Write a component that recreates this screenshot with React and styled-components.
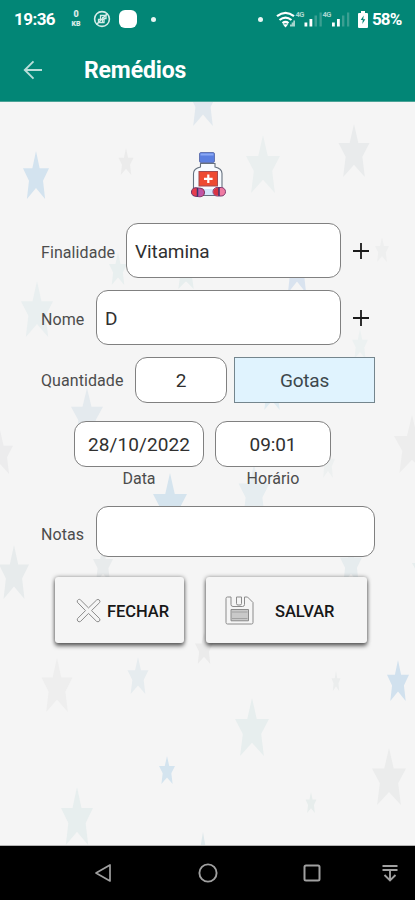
import React from "react";
import styled, { createGlobalStyle } from "styled-components";

const GlobalStyle = createGlobalStyle`
  * { box-sizing: border-box; }
  html, body { margin: 0; padding: 0; }
  body { font-family: Roboto, "Liberation Sans", sans-serif; }
`;

const Screen = styled.div`
  width: 415px;
  height: 900px;
  display: flex;
  flex-direction: column;
  background: #f5f5f5;
  overflow: hidden;
`;

const Header = styled.header`
  height: 102px;
  flex: none;
  background: #028676;
  border-bottom: 1px solid #4aa397;
  color: #fff;
`;

const StatusBar = styled.div`
  height: 38px;
  display: flex;
  align-items: center;
  padding: 0 13px 0 14px;
`;

const Clock = styled.span`
  width: 42px;
  font-size: 17px;
  font-weight: 700;
  line-height: 20px;
  letter-spacing: -0.55px;
  white-space: nowrap;
  margin-right: 14px;
`;

const Speed = styled.div`
  width: 12px;
  display: flex;
  flex-direction: column;
  align-items: center;
  font-size: 9px;
  line-height: 11px;
  font-weight: 900;
  opacity: 0.85;
  margin: -2px 11px 0 0;
`;

const SpeedUnit = styled.span`
  font-size: 7px;
  line-height: 8px;
`;

const AppBlob = styled.span`
  width: 18px;
  height: 18px;
  border-radius: 6px;
  background: #fff;
  margin-left: 8px;
`;

const Dot = styled.span`
  width: 5px;
  height: 5px;
  border-radius: 50%;
  background: #e8f5f3;
  margin: 0 ${(p) => p.$after || 0}px 0 ${(p) => p.$before || 0}px;
`;

const StatusRight = styled.div`
  margin-left: auto;
  display: flex;
  align-items: center;
`;

const Battery = styled.span`
  font-size: 17px;
  font-weight: 700;
  line-height: 20px;
  letter-spacing: -0.9px;
  width: 30px;
  margin-left: 4px;
  white-space: nowrap;
`;

const TitleBar = styled.div`
  height: 63px;
  display: flex;
  align-items: center;
  padding-left: 23px;
`;

const Title = styled.h1`
  margin: 3px 0 0 41px;
  font-size: 23px;
  line-height: 28px;
  font-weight: 700;
  letter-spacing: -0.15px;
`;

const Main = styled.main`
  position: relative;
  flex: 1;
  isolation: isolate;
  border-bottom: 1px solid #b4b4b4;
  overflow: hidden;
`;

const Backdrop = styled.svg`
  position: absolute;
  inset: 0;
  z-index: -1;
`;

const Form = styled.div`
  display: flex;
  flex-direction: column;
  padding: 49px 40px 0 41px;
`;

const Hero = styled.div`
  height: 48px;
  display: flex;
  justify-content: center;
  margin-bottom: 24px;
`;

const Row = styled.div`
  height: ${(p) => p.$h}px;
  display: flex;
  align-items: center;
  margin-bottom: ${(p) => p.$gap}px;
`;

const Label = styled.label`
  width: ${(p) => p.$w}px;
  flex: none;
  padding-top: ${(p) => p.$drop ?? 4}px;
  font-size: 16px;
  line-height: 20px;
  letter-spacing: 0.08px;
  color: #4c4c4c;
  font-weight: 400;
  white-space: nowrap;
`;

const Field = styled.div`
  width: ${(p) => p.$w}px;
  height: 100%;
  flex: none;
  display: flex;
  align-items: center;
  justify-content: ${(p) => (p.$center ? "center" : "flex-start")};
  padding: 2px ${(p) => (p.$center ? 0 : 8)}px 0;
  border: 1px solid #808080;
  border-radius: 12px;
  background: #fff;
  color: #303030;
  font-size: 19px;
  line-height: 24px;
  letter-spacing: ${(p) => p.$track || 0}px;
`;

const UnitButton = styled.button`
  width: 141px;
  height: 46px;
  margin-left: 7px;
  padding: 2px 0 0;
  border: 1px solid #74858d;
  background: #e0f3fe;
  font: 400 19px/24px Roboto, sans-serif;
  letter-spacing: -0.2px;
  color: #3c474c;
`;

const AddButton = styled.button`
  width: 16px;
  height: 16px;
  margin-left: 12px;
  padding: 0;
  border: 0;
  background: transparent;
  display: flex;
`;

const DateRow = styled.div`
  display: flex;
  gap: 11px;
  margin: 0 0 15px 33px;
`;

const DateColumn = styled.div`
  width: ${(p) => p.$w}px;
  display: flex;
  flex-direction: column;
  align-items: center;
`;

const DateBox = styled.div`
  height: 46px;
  display: flex;
`;

const Caption = styled.span`
  margin-top: 2px;
  font-size: 16px;
  line-height: 20px;
  height: 22px;
  letter-spacing: 0;
  color: #4c4c4c;
`;

const Actions = styled.div`
  display: flex;
  gap: 22px;
  margin-left: 14px;
`;

const ActionButton = styled.button`
  width: ${(p) => p.$w}px;
  height: 66px;
  display: flex;
  align-items: center;
  padding: 1px 0 0 ${(p) => p.$pad}px;
  gap: ${(p) => p.$gap}px;
  border: 0;
  border-radius: 3px;
  background: #f5f5f5;
  box-shadow: 0 3px 4px rgba(0, 0, 0, 0.55), 0 0 4px rgba(0, 0, 0, 0.38);
  font: 500 16.5px/20px Roboto, sans-serif;
  letter-spacing: -0.05px;
  color: #181818;
  white-space: nowrap;
`;

const ActionText = styled.span`
  padding-top: 2px;
`;

const NavBar = styled.nav`
  height: 54px;
  flex: none;
  background: #000;
  display: flex;
  align-items: center;
  padding-left: 94px;
`;

const NavIcon = styled.svg`
  flex: none;
  margin-right: ${(p) => p.$gap}px;
`;

/* centre x, top, width, height, colour */
const STARS = [
  [203, 76, 28, 50, "#e1e8ee"],
  [36, 151, 26, 48, "#d3e3ef"],
  [126, 148, 15, 27, "#ebebeb"],
  [263, 135, 34, 58, "#eaefef"],
  [354, 124, 31, 53, "#e9ebec"],
  [37, 281, 32, 56, "#e9eff0"],
  [118, 252, 18, 33, "#e8efef"],
  [186, 255, 22, 34, "#e7eeee"],
  [297, 243, 26, 50, "#d9e3ef"],
  [382, 237, 14, 25, "#eeefef"],
  [360, 329, 16, 30, "#ecf1f1"],
  [272, 370, 22, 40, "#dfebf1"],
  [87, 388, 32, 52, "#e4eaee"],
  [170, 473, 34, 58, "#d5e4ee"],
  [0, 430, 26, 44, "#ececed"],
  [412, 415, 36, 58, "#ededed"],
  [254, 464, 31, 54, "#e6edf0"],
  [328, 448, 14, 30, "#edf0f0"],
  [14, 545, 30, 54, "#e7ebec"],
  [103, 546, 20, 36, "#e8ebec"],
  [351, 543, 22, 40, "#e6ecee"],
  [423, 550, 22, 36, "#e7eeee"],
  [57, 658, 31, 54, "#eeeeee"],
  [138, 657, 21, 37, "#e6ecef"],
  [204, 632, 18, 32, "#ebebeb"],
  [336, 671, 9, 20, "#ebeded"],
  [398, 660, 22, 41, "#d1e1ee"],
  [252, 698, 34, 58, "#e7eeee"],
  [389, 748, 34, 57, "#ebecec"],
  [167, 756, 16, 28, "#d4e4ef"],
  [311, 792, 11, 21, "#e7edec"],
  [77, 787, 32, 58, "#e7eeee"],
  [203, 832, 16, 36, "#dee8eb"],
];

const STAR_POINTS = "50,0 64,36 100,36 77,62 85,100 50,77 15,100 23,62 0,36 36,36";

function StarPattern() {
  return (
    <Backdrop width="415" height="744" viewBox="0 102 415 744">
      {STARS.map(([x, y, w, h, c], i) => (
        <polygon
          key={i}
          points={STAR_POINTS}
          fill={c}
          transform={`translate(${x - w / 2} ${y}) scale(${w / 100} ${h / 100})`}
        />
      ))}
    </Backdrop>
  );
}

function MutedIcon() {
  return (
    <svg width="18" height="18" viewBox="0 0 18 18" fill="none" stroke="#d5ece8">
      <circle cx="9" cy="9" r="7.4" strokeWidth="1.6" />
      <path d="M5.5 12.5V9.5h2V5.5H13v3h-2v4z" strokeWidth="1.3" />
      <path d="M3.5 14.5 14.5 3.5" strokeWidth="1.5" />
      <path d="M8 9.5h3M9.5 7v5" strokeWidth="1" />
    </svg>
  );
}

function SignalIcons() {
  return (
    <svg width="82" height="22" viewBox="0 0 82 22" fontFamily="Roboto, sans-serif">
      <g fill="none" stroke="#fff" strokeWidth="2.2">
        <path d="M1 8.200q8.500-6.800 17 0" />
        <path d="M3.500 12q6-4.800 12 0" />
        <path d="M6.500 15.200q3-2.400 6 0" />
      </g>
      <path d="m6.700 16.200 2.800 3.300 2.800-3.300z" fill="#fff" />
      <path d="M14 18.500v-2h1.700v-2h1.600v-2H19v6z" fill="#a7d4cd" />
      <text x="19.500" y="8.500" fontSize="7.500" fontWeight="700" fill="#a9d5ce" letterSpacing="-.5">4G</text>
      <text x="46.500" y="8.500" fontSize="7.500" fontWeight="700" fill="#a9d5ce" letterSpacing="-.5">4G</text>
      <path d="M28.500 14.500h2.800v4h-2.800zM33.500 11h2.800v7.500h-2.800zM56 14.500h2.800v4H56zM61 11h2.800v7.500H61z" fill="#fff" />
      <path d="M38.500 7.500H41v11h-2.500zM43.500 4.500h2.300v14h-2.300zM66 7.500h2.400v11H66zM71 4.500h2.300v14H71z" fill="#3b9f92" />
    </svg>
  );
}

function BatteryIcon() {
  return (
    <svg width="10" height="17" viewBox="0 0 10 17">
      <path d="M3 0h4v2h2q1 0 1 1v13q0 1-1 1H1q-1 0-1-1V3q0-1 1-1h2z" fill="#fff" />
      <path d="M5.700 4.500 2.700 9h2.100l-.5 4L7.300 8.200H5.200z" fill="#028676" />
    </svg>
  );
}

function BackArrow() {
  return (
    <svg width="20" height="20" viewBox="0 0 20 20" fill="none" stroke="#b9ded9" strokeWidth="1.900">
      <path d="M19 10H2M10.500 1.300 1.800 10l8.700 8.700" />
    </svg>
  );
}

function MedicineIcon() {
  return (
    <svg width="38" height="48" viewBox="0 0 38 48">
      <path d="M11.500 12.500v3.500q-7 1.500-7 6.500v22h28.500v-22q0-5-7-6.500v-3.500z" fill="#f7fbff" stroke="#66717f" strokeWidth="1.100" />
      <path d="M6 38h26v6H6z" fill="#d3e6fb" />
      <rect x="10.500" y="1.500" width="15" height="10" rx="1.500" fill="#5b7fe0" stroke="#5364a5" strokeWidth=".8" />
      <path d="M11.500 3.500h13" stroke="#8ba8f4" strokeWidth="2" />
      <rect x="10" y="20.500" width="18.500" height="14.500" fill="#ee4a32" stroke="#a34b50" strokeWidth="1" />
      <path d="M19.300 23.500v8.500M15 27.800h8.600" stroke="#fff" strokeWidth="2.200" />
      <rect x="2.500" y="37" width="13" height="8.500" rx="4.200" fill="#e83d4d" stroke="#703268" transform="rotate(5 9 41)" />
      <path d="M9 37.500v8l3-.2q3-1.500 2.800-4-.5-3.300-5.800-3.800z" fill="#bd55a8" />
      <path d="M8.500 37v8.500" stroke="#39356f" strokeWidth="1.500" />
      <rect x="24" y="36.500" width="12.500" height="8.500" rx="4.200" fill="#ef7ba2" stroke="#803b70" />
      <path d="M30 37h-2q-3.500 1-3.500 3.700 0 3 3.500 3.800h2z" fill="#d93342" />
      <path d="M30 36.500V45" stroke="#3a3771" strokeWidth="1.500" />
    </svg>
  );
}

function Add() {
  return (
    <AddButton aria-label="Adicionar">
      <svg width="16" height="16" viewBox="0 0 16 16">
        <path d="M8 0v16M0 8h16" stroke="#1a1a1a" strokeWidth="1.800" />
      </svg>
    </AddButton>
  );
}

function CloseIcon() {
  return (
    <svg width="25" height="25" viewBox="0 0 25 25">
      <path
        d="M1.300 4.200Q.7 2.400 2.500 1.500q1.300-.5 2.100.5l7.900 7.900L20.600 2q1.500-1.200 2.700 0t.3 2.600l-8.100 8 8.100 8q.9 1.500-.3 2.600t-2.700.2l-8.100-8-7.900 8q-1.600 1-2.700-.2t-.4-2.600l8-8z"
        fill="none" stroke="#8c8c8c" strokeWidth="1"
      />
    </svg>
  );
}

function SaveIcon() {
  return (
    <svg width="29" height="29" viewBox="0 0 29 29" fill="none" stroke="#8b8b8b" strokeWidth="1">
      <path d="M2.500 1H6v7.500q0 2 2 2h9.500q2 0 2-2V1h3L28 6.500v20q0 1.500-1.500 1.500h-24Q1 28 1 26.500v-24Q1 1 2.500 1z" />
      <path d="M11.500 1h5v6.500q0 1.500-1.500 1.500h-2q-1.500 0-1.500-1.500z" />
      <path d="M6 13.500h17.500v11.300H6z" fill="#c9c9c9" />
      <path d="M7 16h15.500M7 22.500h15.500" stroke="#a2a2a2" />
    </svg>
  );
}

export default function App() {
  return (
    <Screen>
      <GlobalStyle />
      <Header>
        <StatusBar>
          <Clock>19:36</Clock>
          <Speed>
            <span>0</span>
            <SpeedUnit>KB</SpeedUnit>
          </Speed>
          <MutedIcon />
          <AppBlob />
          <Dot $before={14} />
          <StatusRight>
            <Dot $after={13} />
            <SignalIcons />
            <BatteryIcon />
            <Battery>58%</Battery>
          </StatusRight>
        </StatusBar>
        <TitleBar>
          <BackArrow />
          <Title>Remédios</Title>
        </TitleBar>
      </Header>
      <Main>
        <StarPattern />
        <Form>
          <Hero>
            <MedicineIcon />
          </Hero>
          <Row $h={55} $gap={12}>
            <Label $w={85}>Finalidade</Label>
            <Field $w={215} $track={-0.1}>Vitamina</Field>
            <Add />
          </Row>
          <Row $h={55} $gap={12}>
            <Label $w={55}>Nome</Label>
            <Field $w={245}>D</Field>
            <Add />
          </Row>
          <Row $h={46} $gap={18}>
            <Label $w={94} $drop={2}>Quantidade</Label>
            <Field $w={92} $center>2</Field>
            <UnitButton>Gotas</UnitButton>
          </Row>
          <DateRow>
            <DateColumn $w={130}>
              <DateBox>
                <Field $w={130} $center $track={0.1}>28/10/2022</Field>
              </DateBox>
              <Caption>Data</Caption>
            </DateColumn>
            <DateColumn $w={116}>
              <DateBox>
                <Field $w={116} $center $track={-0.1}>09:01</Field>
              </DateBox>
              <Caption>Horário</Caption>
            </DateColumn>
          </DateRow>
          <Row $h={51} $gap={20}>
            <Label $w={55} $drop={6}>Notas</Label>
            <Field $w={279} />
          </Row>
          <Actions>
            <ActionButton $w={129} $pad={21} $gap={6}>
              <CloseIcon />
              <ActionText>FECHAR</ActionText>
            </ActionButton>
            <ActionButton $w={161} $pad={19} $gap={21}>
              <SaveIcon />
              <ActionText>SALVAR</ActionText>
            </ActionButton>
          </Actions>
        </Form>
      </Main>
      <NavBar>
        <NavIcon width="18" height="20" viewBox="0 0 18 20" $gap={86} fill="none" stroke="#a0a0a0" strokeWidth="1.700">
          <path d="M16 2v16L2 10z" strokeLinejoin="round" />
        </NavIcon>
        <NavIcon width="20" height="20" viewBox="0 0 20 20" $gap={85} fill="none" stroke="#a0a0a0" strokeWidth="1.900">
          <circle cx="10" cy="10" r="8.600" />
        </NavIcon>
        <NavIcon width="18" height="18" viewBox="0 0 18 18" $gap={61} fill="none" stroke="#a0a0a0" strokeWidth="2">
          <rect x="1.500" y="1.500" width="15" height="15" rx="1.500" />
        </NavIcon>
        <NavIcon width="16" height="18" viewBox="0 0 16 18" $gap={0} fill="none" stroke="#a0a0a0" strokeWidth="1.900">
          <path d="M.5 2h15M.5 6h15M8 7v9.500M2.500 11 8 16.500l5.500-5.500" />
        </NavIcon>
      </NavBar>
    </Screen>
  );
}
